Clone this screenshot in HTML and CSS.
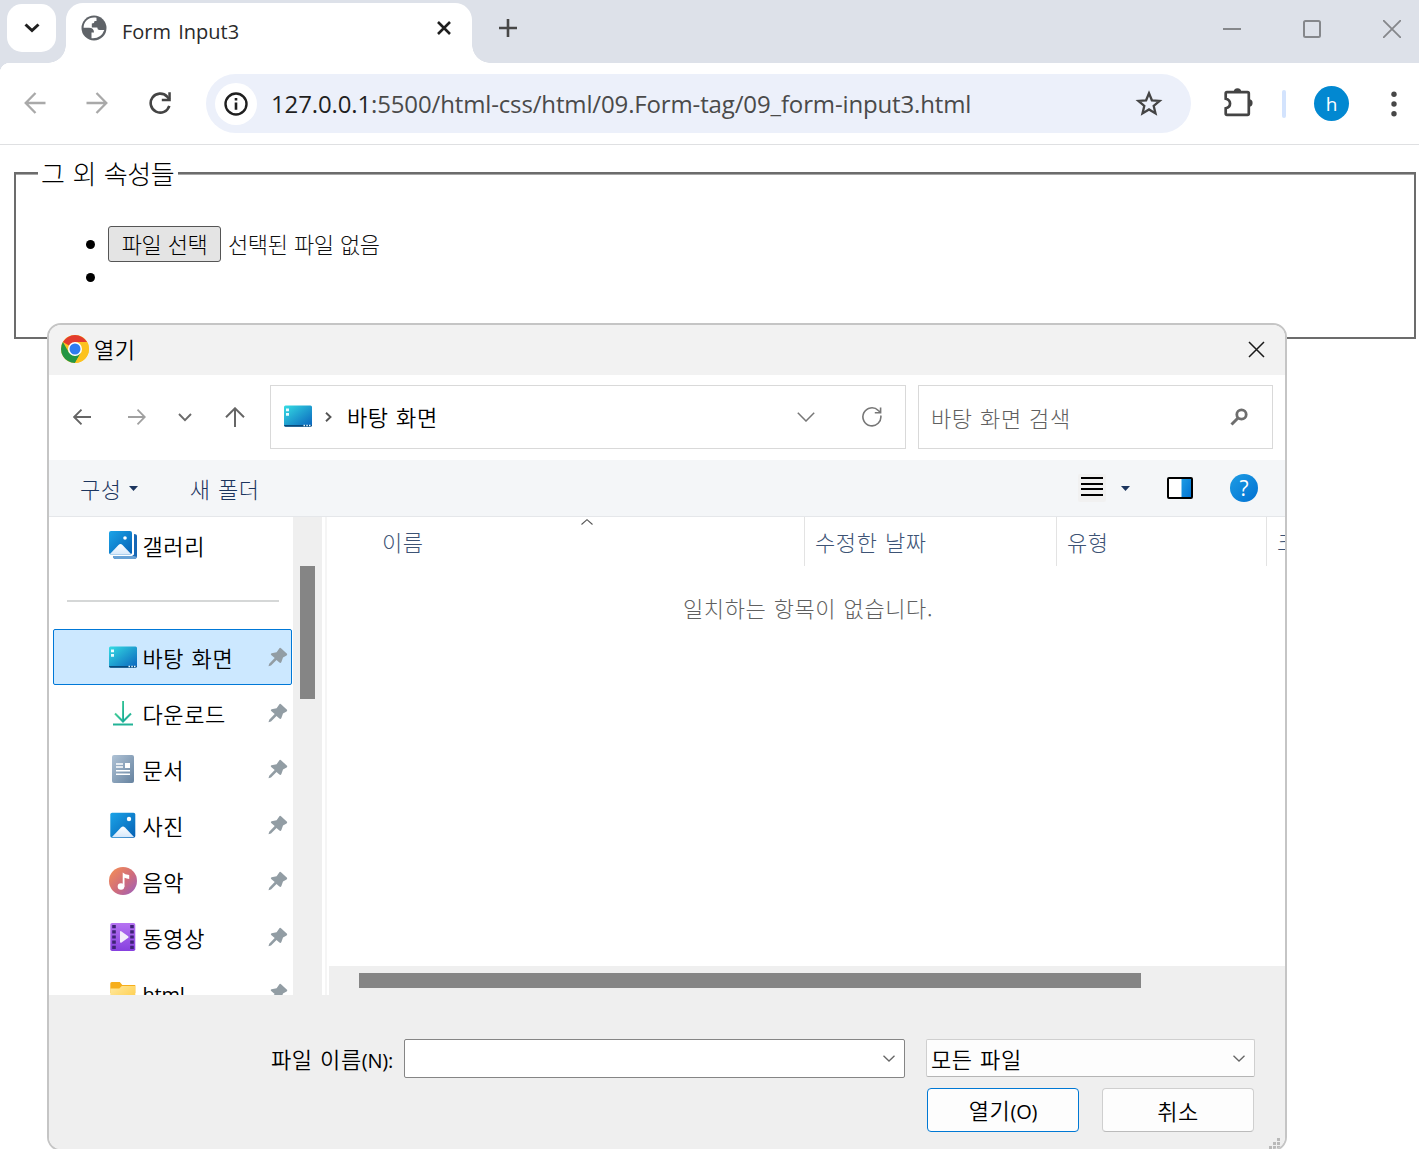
FILE: index.html
```html
<!DOCTYPE html>
<html lang="ko">
<head>
<meta charset="utf-8">
<title>Form Input3</title>
<link rel="stylesheet" href="styles.css">
</head>
<body>
<svg class="sprite" aria-hidden="true">
  <defs>
    <linearGradient id="g-desk" x1="0" y1="0" x2="1" y2="1"><stop offset="0" stop-color="#35dde3"/><stop offset=".5" stop-color="#1f9fd0"/><stop offset="1" stop-color="#0a63bd"/></linearGradient>
    <linearGradient id="g-blue" x1="0" y1="0" x2="1" y2="1"><stop offset="0" stop-color="#1ba4e8"/><stop offset="1" stop-color="#0560b4"/></linearGradient>
    <linearGradient id="g-hill" x1="0" y1="0" x2="0" y2="1"><stop offset="0" stop-color="#fff"/><stop offset="1" stop-color="#d6e8fb"/></linearGradient>
    <linearGradient id="g-down" x1="0" y1="0" x2="1" y2="1"><stop offset="0" stop-color="#45cf98"/><stop offset="1" stop-color="#0fa398"/></linearGradient>
    <linearGradient id="g-doc" x1="0" y1="0" x2="1" y2="1"><stop offset="0" stop-color="#b0c3d6"/><stop offset="1" stop-color="#65829f"/></linearGradient>
    <linearGradient id="g-music" x1="0" y1="0" x2="1" y2="1"><stop offset="0.1" stop-color="#f08a5a"/><stop offset=".55" stop-color="#cf6c7c"/><stop offset="1" stop-color="#9a5fc0"/></linearGradient>
    <linearGradient id="g-video" x1="0" y1="0" x2="0" y2="1"><stop offset="0" stop-color="#b673f2"/><stop offset="1" stop-color="#8640df"/></linearGradient>
    <linearGradient id="g-folder" x1="0" y1="0" x2="1" y2="1"><stop offset="0" stop-color="#ffe9a0"/><stop offset="1" stop-color="#ffc83a"/></linearGradient>
    <linearGradient id="g-help" x1="0" y1="0" x2="1" y2="1"><stop offset="0" stop-color="#1e9de4"/><stop offset="1" stop-color="#0070d2"/></linearGradient>
  </defs>
  <symbol id="pin" viewBox="0 0 20 20"><path d="M11.6 1 Q12.4 .6 13 1.2 L19 6.8 Q19.6 7.6 18.6 8.4 L15 10.5 13.4 15 Q12.6 16.6 11.4 15.5 L8.5 12.9 3 18.4 .5 19.3 1.2 16.7 6.7 11 3.2 8 Q2.2 6.8 3.6 6.3 L8.6 5.2Z" fill="#929da4"/></symbol>
  <symbol id="desktop" viewBox="0 0 28 28"><rect y="3.5" width="28" height="21" rx="1.5" fill="url(#g-desk)"/><path d="M0 23h28v0q0 1.7-1.5 1.7h-25Q0 24.700 0 23Z" fill="#084a7c"/><path d="M2 6.500h3v2.700H2zM2 11h3v2.700H2zM19.500 22.800h1.500v1.500h-1.500zM22.300 22.800h1.500v1.500h-1.500zM25 22.800h1.500v1.500H25z" fill="#e8fbff"/></symbol>
</svg>

<header class="tabstrip">
  <button class="tab-search"><svg width="16" height="10" viewBox="0 0 16 10"><path d="M1.500 1.500 8 7.500l6.500-6" fill="none" stroke="#1f1f1f" stroke-width="3"/></svg></button>
  <div class="tab">
    <svg class="globe" width="26" height="26" viewBox="0 0 26 26"><circle cx="13" cy="13" r="12.500" fill="#5f6368"/><path d="M15.500 2.800C8 1.500 2.600 6.500 2.600 12.800H8Q13 12.800 13 17.500H10.500V23.200Q20 24 23.300 15H18.500Q16.300 15 16.300 12.500H10.800V8.500Q13.500 8.500 13.500 6H15.500Z" fill="#fff"/></svg>
    <span class="tab-title">Form Input3</span>
    <svg class="tab-x" width="14" height="14" viewBox="0 0 14 14"><path d="M1 1l12 12M13 1 1 13" stroke="#1f1f1f" stroke-width="2.600"/></svg>
  </div>
  <svg class="new-tab" width="18" height="18" viewBox="0 0 18 18"><path d="M9 0v18M0 9h18" stroke="#474747" stroke-width="2.600"/></svg>
  <div class="win-controls">
    <svg width="18" height="18" viewBox="0 0 18 18"><path d="M0 9h18" stroke="#85878b" stroke-width="2"/></svg>
    <svg width="18" height="18" viewBox="0 0 18 18"><rect x="1" y="1" width="16" height="16" rx="1.500" fill="none" stroke="#85878b" stroke-width="2"/></svg>
    <svg width="18" height="18" viewBox="0 0 18 18"><path d="M0 0l18 18M18 0 0 18" stroke="#85878b" stroke-width="1.800"/></svg>
  </div>
</header>

<nav class="toolbar">
  <svg class="tb-back" width="22" height="22" viewBox="0 0 22 22"><path d="M21.500 11H2M11.500 1 1.700 11l9.800 10" fill="none" stroke="#a9a9a9" stroke-width="2.300"/></svg>
  <svg class="tb-fwd" width="22" height="22" viewBox="0 0 22 22"><path d="M.5 11H20M10.500 1l9.800 10-9.800 10" fill="none" stroke="#a9a9a9" stroke-width="2.300"/></svg>
  <svg class="tb-reload" width="22" height="22" viewBox="0 0 22 22"><path d="M20.300 13.800A9.500 9.500 0 1 1 18 4.500L20.500 7.500" fill="none" stroke="#444" stroke-width="2.600"/><path d="M21.800 .3v8.900h-9V6.700h6.500V.3Z" fill="#444"/></svg>
  <div class="omnibox">
    <span class="info"><svg width="24" height="24" viewBox="0 0 24 24"><circle cx="12" cy="12" r="10.500" fill="none" stroke="#1f1f1f" stroke-width="2.400"/><path d="M12 10.500v7.300M12 6v2.600" stroke="#1f1f1f" stroke-width="2.600"/></svg></span>
    <span class="url"><b>127.0.0.1</b>:5500/html-css/html/09.Form-tag/09_form-input3.html</span>
    <svg class="star" width="28" height="27" viewBox="0 0 28 27"><path d="M14 3.200 16.900 10.300 24.600 10.900 18.700 15.900 20.500 23.400 14 19.400 7.500 23.400 9.300 15.900 3.400 10.900 11.100 10.300Z" fill="none" stroke="#444" stroke-width="2.300"/></svg>
  </div>
  <svg class="puzzle" width="30" height="30" viewBox="0 0 30 30"><path d="M3 5.200h20.500q1.300 0 1.300 1.300v20q0 1.300-1.300 1.300H3q-1.300 0-1.300-1.300v-5.200C7.500 20 7.500 13.200 1.700 11.800V6.500Q1.700 5.200 3 5.200Z" fill="none" stroke="#444" stroke-width="2.700"/><path d="M9.800 5a3.700 3.700 0 0 1 7.400 0ZM25 12.300a3.600 3.600 0 0 1 0 7.200Z" fill="#444"/></svg>
  <i class="tb-sep"></i>
  <span class="avatar">h</span>
  <svg class="kebab" width="6" height="26" viewBox="0 0 6 26"><g fill="#474747"><circle cx="3" cy="3.200" r="2.700"/><circle cx="3" cy="13" r="2.700"/><circle cx="3" cy="22.800" r="2.700"/></g></svg>
</nav>

<main class="page">
  <fieldset class="box">
    <legend>그 외 속성들</legend>
    <ul class="items">
      <li><button class="file-btn">파일 선택</button><span class="file-none">선택된 파일 없음</span></li>
      <li></li>
    </ul>
  </fieldset>
</main>

<section class="dialog">
  <div class="d-title">
    <svg width="28" height="28" viewBox="0 0 28 28"><circle cx="14" cy="14" r="14" fill="#fcc21f"/><path d="M14 14 1.900 7A14 14 0 0 1 26.100 7H14Z" fill="#e33b2e"/><path d="M1.900 7 7.900 17.500 14 21 20 17.500 14 28A14 14 0 0 1 1.900 7Z" fill="#249644"/><path d="M14 7h12.100A14 14 0 0 1 14 28l6.100-10.500Z" fill="#fcc21f"/><circle cx="14" cy="14" r="7" fill="#fff"/><circle cx="14" cy="14" r="5.500" fill="#2f7cf0"/></svg>
    <span>열기</span>
    <svg class="d-close" width="17" height="17" viewBox="0 0 17 17"><path d="M1 1l15 15M16 1 1 16" stroke="#1a1a1a" stroke-width="1.500"/></svg>
  </div>

  <div class="d-nav">
    <svg class="n-back" width="18" height="16" viewBox="0 0 18 16"><path d="M18 8H1.500M8.500 .7 1.200 8l7.300 7.300" fill="none" stroke="#666" stroke-width="1.900"/></svg>
    <svg class="n-fwd" width="18" height="16" viewBox="0 0 18 16"><path d="M0 8h16.500M9.500 .7 16.800 8l-7.300 7.300" fill="none" stroke="#a0a0a0" stroke-width="1.800"/></svg>
    <svg class="n-down" width="14" height="9" viewBox="0 0 14 9"><path d="M1 1l6 6.200L13 1" fill="none" stroke="#6a6a6a" stroke-width="1.900"/></svg>
    <svg class="n-up" width="20" height="20" viewBox="0 0 20 20"><path d="M10 20V1.500M1 10.300l9-9 9 9" fill="none" stroke="#666" stroke-width="2"/></svg>
    <div class="address">
      <svg width="28" height="28"><use href="#desktop"/></svg>
      <svg class="crumb" width="7" height="10" viewBox="0 0 7 10"><path d="M1 .8 5.500 5 1 9.200" fill="none" stroke="#555" stroke-width="1.900"/></svg>
      <span>바탕 화면</span>
      <svg class="a-down" width="18" height="10" viewBox="0 0 18 10"><path d="M.8 .8 9 9 17.200 .8" fill="none" stroke="#777" stroke-width="1.500"/></svg>
      <svg class="a-reload" width="20" height="20" viewBox="0 0 20 20"><path d="M18.800 8.500A9 9 0 1 1 16.300 3.500L18.500 5.500M18.600 .5v5.300h-5.800" fill="none" stroke="#777" stroke-width="1.600"/></svg>
    </div>
    <div class="search">
      <span>바탕 화면 검색</span>
      <svg width="18" height="18" viewBox="0 0 18 18"><circle cx="11.500" cy="6.500" r="4.700" fill="none" stroke="#6e6e6e" stroke-width="2.800"/><path d="M8 10 1.500 16.500" stroke="#6e6e6e" stroke-width="3"/></svg>
    </div>
  </div>

  <div class="d-tools">
    <span>구성</span><svg class="caret" width="9" height="5" viewBox="0 0 9 5"><path d="M0 0h9L4.500 5Z" fill="#1c355e"/></svg>
    <span class="new-folder">새 폴더</span>
    <svg class="t-list" width="28" height="28" viewBox="0 0 28 28"><rect width="28" height="28" rx="2" fill="#f1f1f1"/><path d="M3 4h22M3 10h22M3 15h22M3 21h22" stroke="#000" stroke-width="2"/></svg>
    <svg class="t-caret" width="9" height="5" viewBox="0 0 9 5"><path d="M0 0h9L4.500 5Z" fill="#1c355e"/></svg>
    <svg class="t-pane" width="26" height="22" viewBox="0 0 26 22"><rect x="1" y="1" width="24" height="20" rx="1" fill="#fff"/><path d="M14.500 1H25v20H14.500Z" fill="url(#g-help)"/><rect x="1" y="1" width="24" height="20" rx="1" fill="none" stroke="#000" stroke-width="2"/></svg>
    <span class="help">?</span>
  </div>

  <div class="d-body">
    <aside class="tree">
      <div class="row"><svg width="28" height="28" viewBox="0 0 28 28"><path d="M4 24h20q1 0 1-1V3q3 0 3 2v20q0 3-3 3H7q-3 0-3-3Z" fill="#1767b5"/><path d="M4 25h21l3 1q-1 2-3 2H7q-3 0-3-3Z" fill="#69a2d6"/><rect width="24.500" height="25" rx="2" fill="#fff"/><rect width="23" height="23.500" rx="2" fill="url(#g-blue)"/><path d="M1 23 9.500 14q2-2 4 0l8.500 9q-.5 .5-1.500 .5H2Z" fill="url(#g-hill)"/><circle cx="16" cy="7" r="1.800" fill="#fff"/></svg><span>갤러리</span></div>
      <div class="divider"></div>
      <div class="row selected"><svg width="28" height="28"><use href="#desktop"/></svg><span>바탕 화면</span><svg class="pin" width="20" height="20"><use href="#pin"/></svg></div>
      <div class="row"><svg width="28" height="28" viewBox="0 0 28 28"><path d="M6 14.500l8 8 8-8" fill="none" stroke="url(#g-down)" stroke-width="2"/><path d="M4 24.500h20v2H4z" fill="#22b396"/><path d="M13.100 2h1.900v20h-1.900z" fill="url(#g-down)"/></svg><span>다운로드</span><svg class="pin" width="20" height="20"><use href="#pin"/></svg></div>
      <div class="row"><svg width="28" height="28" viewBox="0 0 28 28"><rect x="3" width="22" height="28" rx="2" fill="url(#g-doc)"/><path d="M7 9h7M7 12h7M7 15.800h14M7 19.300h14" stroke="#fff" stroke-width="1.600"/><path d="M16 8h5v5h-5z" fill="#fff"/></svg><span>문서</span><svg class="pin" width="20" height="20"><use href="#pin"/></svg></div>
      <div class="row"><svg width="28" height="28" viewBox="0 0 28 28"><rect x="1.300" y="1.700" width="25" height="25" rx="1.800" fill="url(#g-blue)"/><path d="M3 26 12 16.500q2-2 4 0l9 9.500Z" fill="url(#g-hill)"/><circle cx="20" cy="8" r="2.200" fill="#fff"/></svg><span>사진</span><svg class="pin" width="20" height="20"><use href="#pin"/></svg></div>
      <div class="row"><svg width="28" height="28" viewBox="0 0 28 28"><circle cx="14" cy="14" r="14" fill="url(#g-music)"/><circle cx="12" cy="19.500" r="3.300" fill="#fff"/><path d="M13.700 5.500q2 2 6.500 2.500v4q-2.500-.2-4.700-1.300v9h-1.800Z" fill="#fff"/></svg><span>음악</span><svg class="pin" width="20" height="20"><use href="#pin"/></svg></div>
      <div class="row"><svg width="28" height="28" viewBox="0 0 28 28"><rect x="1.300" width="25" height="28" rx="1.800" fill="url(#g-video)"/><path d="M5 2v25M23 2v25" stroke="#3f2377" stroke-width="3.600" stroke-dasharray="3.200 2"/><path d="M11 9q0-1.500 1.200-.8l7 5q.8 .8 0 1.500l-7 5Q11 20 11 18.800Z" fill="#f3ecfb"/></svg><span>동영상</span><svg class="pin" width="20" height="20"><use href="#pin"/></svg></div>
      <div class="row"><svg width="28" height="28" viewBox="0 0 28 28"><path d="M1.300 4.500q0-1.500 1.500-1.500h8l2.500 3h13v8h-25Z" fill="#f6ae1c"/><path d="M1.300 9.500h9l2.500-2.500h13.500v20h-25Z" fill="url(#g-folder)"/></svg><span class="latin">html</span><svg class="pin" width="20" height="20"><use href="#pin"/></svg></div>
    </aside>
    <div class="vscroll"><i></i></div>
    <div class="list">
      <div class="cols">
        <div class="c-name">이름<svg class="sort" width="12" height="6" viewBox="0 0 12 6"><path d="M.5 5.500 6 .7l5.500 4.800" fill="none" stroke="#555" stroke-width="1.100"/></svg></div>
        <div class="c-date">수정한 날짜</div>
        <div class="c-type">유형</div>
        <div class="c-size">크기</div>
      </div>
      <p class="empty">일치하는 항목이 없습니다.</p>
      <div class="hscroll"><i></i></div>
    </div>
  </div>

  <footer class="d-foot">
    <label class="fname">파일 이름<span class="latin">(N):</span></label>
    <div class="combo"><svg width="12" height="7" viewBox="0 0 12 7"><path d="M.5 .7 6 6l5.500-5.300" fill="none" stroke="#666" stroke-width="1.300"/></svg></div>
    <div class="right">
      <div class="filter"><span>모든 파일</span><svg width="12" height="7" viewBox="0 0 12 7"><path d="M.5 .7 6 6l5.500-5.300" fill="none" stroke="#666" stroke-width="1.300"/></svg></div>
      <div class="buttons"><button class="btn primary">열기<span class="latin">(O)</span></button><button class="btn">취소</button></div>
    </div>
    <svg class="grip" width="11" height="11" viewBox="0 0 11 11"><path d="M8 0h3v3H8zM4 4h3v3H4zM8 4h3v3H8zM0 8h3v3H0zM4 8h3v3H4zM8 8h3v3H8z" fill="#b9b9b9"/></svg>
  </footer>
</section>
</body>
</html>
```
FILE: styles.css
```css
* { box-sizing: border-box; }
body {
  margin: 0;
  width: 1419px;
  height: 1149px;
  overflow: hidden;
  position: relative;
  background: #fff;
  color: #000;
  font: 350 22px/30px "Noto Sans CJK KR", sans-serif;
  letter-spacing: .6px;
  word-spacing: .6px;
}
svg { display: block; flex: none; }
button { font: inherit; letter-spacing: inherit; word-spacing: inherit; color: inherit; padding: 0; }
.sprite { position: absolute; width: 0; height: 0; }
.latin { font-family: "Open Sans", sans-serif; font-weight: 400; font-size: 20px; letter-spacing: -.2px; }

/* Tab strip */
.tabstrip { display: flex; height: 63px; background: #dde1e9; padding: 3px 18px 0 7px; align-items: flex-start; }
.tab-search { width: 49px; height: 48px; margin-top: 1px; border: 0; border-radius: 15px; background: #fff; display: flex; align-items: center; justify-content: center; }
.tab { position: relative; display: flex; width: 406px; height: 60px; margin-left: 10px; padding: 0 21px 0 15px; background: #fff; border-radius: 17px 17px 0 0; }
.tab::before, .tab::after { content: ""; position: absolute; bottom: 0; width: 18px; height: 18px; }
.tab::before { left: -18px; background: radial-gradient(circle at 0 0, transparent 17.500px, #fff 18px); }
.tab::after { right: -18px; background: radial-gradient(circle at 100% 0, transparent 17.500px, #fff 18px); }
.globe { margin-top: 12px; }
.tab-title { margin: 14px auto 0 15px; font: 400 20px/30px "Open Sans", sans-serif; letter-spacing: 0; word-spacing: 2px; color: #2a2a2a; }
.tab-x { margin-top: 18px; }
.new-tab { margin: 16px 0 0 26.500px; }
.win-controls { display: flex; gap: 62px; margin: 17px 0 0 auto; }

/* Toolbar */
.toolbar { display: flex; align-items: center; height: 82px; padding: 0 22px 0 24px; border-bottom: 1px solid #dfe0e2; background: radial-gradient(circle at 10px 10px, #fff 10px, #dde1e9 10.500px) 0 0 / 10px 10px no-repeat, #fff; }
.tb-back, .tb-fwd, .tb-reload { margin-top: -1px; }
.tb-fwd { margin-left: 40px; }
.tb-reload { margin-left: 41px; }
.omnibox { display: flex; align-items: center; width: 985px; height: 59px; margin-left: 35px; padding: 0 28px 0 9px; border-radius: 30px; background: #ecf0fa; }
.info { display: flex; align-items: center; justify-content: center; width: 42px; height: 42px; border-radius: 50%; background: #fff; }
.url { margin: 0 auto 0 14px; font: 400 24px/32px "Open Sans", sans-serif; letter-spacing: -.14px; word-spacing: 0; color: #4a4a4a; white-space: nowrap; }
.url b { font-weight: 400; color: #1f1f1f; }
.puzzle { margin-left: 33px; margin-top: -3px; }
.tb-sep { width: 4px; height: 28px; margin-left: 28px; border-radius: 2px; background: #d3e3fd; }
.avatar { display: flex; align-items: center; justify-content: center; width: 35px; height: 35px; margin-left: 28px; border-radius: 50%; background: #0288d1; color: #fff; font: 400 19px/30px "Open Sans", sans-serif; letter-spacing: 0; }
.kebab { margin-left: auto; }

/* Page */
.page { padding: 11px 3px 0 14px; font-weight: 300; }
.box { height: 183px; margin: 0; padding: 30px 0 0 67px; border: 2px solid #6c6c6c; box-shadow: inset 0 1px #a8a8a8; min-width: 0; }
.box legend { margin-left: -45px; padding: 0 4px 0 3px; background: #fff; font-size: 26px; line-height: 34px; letter-spacing: -.4px; word-spacing: 1px; font-weight: 300; }
.items { margin: 0; padding: 6px 0 0 2.500px; list-style: none; }
.items li { display: flex; align-items: center; height: 36px; }
.items li + li { height: 31px; }
.items li::before { content: ""; width: 9px; height: 9px; border-radius: 50%; background: #000; }
.file-btn { width: 113px; height: 36px; margin: 0 7px 0 13.500px; padding-bottom: 2px; border: 1px solid #555; border-radius: 3px; background: #e4e4e4; letter-spacing: -.4px; }
.file-none { margin-top: -2px; letter-spacing: -.4px; color: #111; }

/* File dialog, floating over the page */
.dialog { position: absolute; left: 47px; top: 323px; width: 1240px; height: 828px; border: 2px solid #c5c5c5; border-radius: 14px; background: #fff; overflow: hidden; }
.d-title { display: flex; align-items: center; height: 50px; padding: 0 20px 2px 12px; background: #f2f2f2; }
.d-title span { margin: -2px 0 0 5px; }
.d-close { margin-left: auto; }
.d-nav { display: flex; align-items: center; height: 85px; padding: 0 12px 1px 24px; }
.n-fwd { margin-left: 37px; }
.n-down { margin-left: 32px; }
.n-up { margin-left: 33px; }
.address, .search { display: flex; align-items: center; height: 64px; border: 1px solid #d9d9d9; }
.address { width: 636px; margin-left: 25px; padding: 0 23px 0 13px; }
.address span { margin-top: -3px; }
.search span { margin-top: -1px; }
.address > svg:first-child { margin-top: -2px; }
.address .crumb { margin: 0 15px 0 13px; }
.a-down { margin-left: auto; }
.a-reload { margin-left: 47px; }
.search { width: 355px; margin-left: 12px; padding: 0 24px 0 12px; color: #606060; font-weight: 300; }
.search svg { margin-left: auto; }
.d-tools { display: flex; align-items: center; height: 57px; padding: 0 27px 0 31px; background: #f4f6f8; border-bottom: 1px solid #e5e7ea; color: #1c355e; font-weight: 300; }
.caret { margin-left: 7px; }
.new-folder { margin-left: 52px; }
.t-list { margin-left: auto; }
.t-caret { margin-left: 15px; }
.t-pane { margin-left: 37px; }
.help { display: flex; align-items: center; justify-content: center; width: 28px; height: 28px; margin-left: 37px; border-radius: 50%; background: linear-gradient(135deg, #1e9de4, #0070d2); color: #fff; font: 400 21px/28px "Open Sans", sans-serif; letter-spacing: 0; }

.d-body { display: flex; height: 478px; }
.tree { width: 244px; overflow: hidden; padding: 0 1px 0 4px; }
.row { display: flex; align-items: center; height: 56px; padding: 0 4px 0 56px; }
.row span { margin: -1px auto 0 5.500px; white-space: nowrap; }
.row .latin { margin-top: 4px; }
.row.selected { padding: 0 3px 0 55px; border: 1px solid #0078d7; border-radius: 2px; background: #cce8ff; }
.divider { height: 56px; padding: 27px 13px 0 14px; }
.divider::before { content: ""; display: block; height: 2px; background: #d5d7d7; }
.vscroll { width: 29px; padding: 49px 7px 0; background: #efefef; }
.vscroll i { display: block; height: 133px; background: #858585; }
.list { display: flex; flex-direction: column; flex: 1; min-width: 0; margin-left: 3px; border-left: 2px solid #f5f5f5; }
.cols { display: flex; height: 49px; color: #3d5375; font-weight: 300; line-height: 48px; white-space: nowrap; overflow: hidden; }
.cols > div { flex: none; border-right: 1px solid #e3e3e3; }
.c-name { position: relative; width: 478px; padding-left: 55px; }
.sort { position: absolute; left: 254px; top: 2px; }
.c-date { width: 252px; padding-left: 10px; }
.c-type { width: 210px; padding-left: 10px; }
.c-size { width: 60px; padding-left: 10px; }
.empty { margin: 26px 0 0; padding-left: 4px; text-align: center; color: #606060; font-weight: 300; }
.hscroll { height: 29px; margin: auto 0 0 2px; padding: 7px 0 0 30px; background: #efefef; }
.hscroll i { display: block; width: 782px; height: 15px; background: #858585; }

.d-foot { position: relative; display: flex; height: 160px; padding: 44px 30px 0 222px; background: #efefef; }
.fname { width: 133px; height: 39px; line-height: 39px; white-space: nowrap; }
.combo { display: flex; align-items: center; justify-content: flex-end; width: 501px; height: 39px; padding-right: 9px; border: 1px solid #858585; border-radius: 2px; background: #fff; }
.right { margin-left: 21px; }
.filter { display: flex; align-items: center; justify-content: space-between; width: 329px; height: 38px; padding: 0 9px 0 4px; border: 1px solid #cfcfcf; border-bottom-color: #b5b5b5; border-radius: 2px; background: #fdfdfd; }
.filter span { margin-top: -1px; }
.buttons { display: flex; gap: 23px; margin: 11px 0 0 1px; }
.btn { width: 152px; height: 44px; padding-bottom: 1px; border: 1px solid #cfcfcf; border-bottom-color: #bbb; border-radius: 4px; background: #fdfdfd; }
.btn.primary { border-color: #0078d4; padding-bottom: 0; }
.grip { position: absolute; left: 1220px; top: 143px; }
```
